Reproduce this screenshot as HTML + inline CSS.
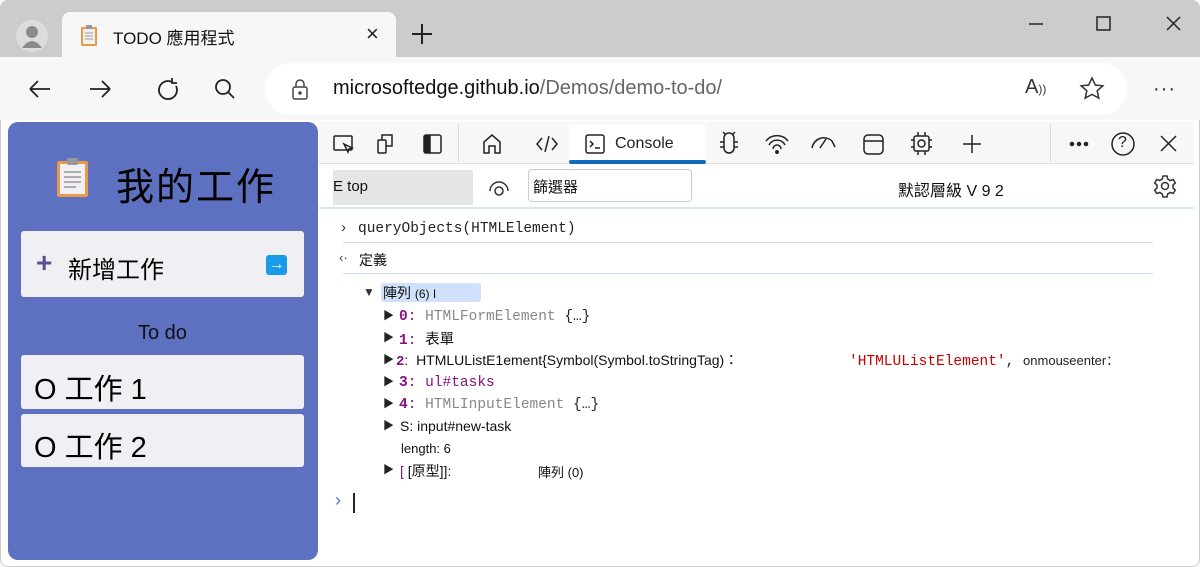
<!DOCTYPE html>
<html><head><meta charset="utf-8"><style>
*{box-sizing:border-box;margin:0;padding:0}
body{width:1200px;height:567px;overflow:hidden;background:#f7f7f7;font-family:"Liberation Sans","Noto Sans CJK TC",sans-serif;position:relative}
.abs{position:absolute}
.mono{font-family:"Liberation Mono","Noto Sans CJK TC",monospace}
svg{position:absolute}
</style></head><body>
<div class="abs" style="left:0;top:0;width:1200px;height:57px;background:#cccccc;border-radius:8px 8px 0 0"></div>
<div class="abs" style="left:16px;top:20px;width:32px;height:32px;border-radius:50%;background:#dcdcdc"></div>
<svg style="left:16px;top:20px" width="32" height="32"><circle cx="16" cy="12" r="6" fill="#8a8a8a"/><path d="M6 28 Q16 14 26 28Z" fill="#8a8a8a"/></svg>
<div class="abs" style="left:62px;top:12px;width:334px;height:46px;background:#f7f7f7;border-radius:8px 8px 0 0"></div>
<svg style="left:80px;top:25px" width="20" height="22"><rect x="1" y="2" width="16" height="19" rx="1" fill="#e8994a"/><rect x="3" y="4" width="12" height="15" fill="#f4f0f0"/><path d="M5 8h8M5 11h8M5 14h8" stroke="#999"/><rect x="6" y="0" width="6" height="4" fill="#999"/></svg>
<div class="abs" style="left:113px;top:24px;font-size:17px;color:#111">TODO 應用程式</div>
<div class="abs" style="left:366px;top:21px;font-size:22px;color:#222">×</div>
<svg style="left:410px;top:22px" width="24" height="24"><path d="M12 2v20M2 12h20" stroke="#222" stroke-width="2"/></svg>
<svg style="left:1025px;top:12px" width="170" height="24" fill="none" stroke="#222" stroke-width="1.5"><path d="M4 12h14"/><rect x="72" y="5" width="13" height="13"/><path d="M142 5l13 13M155 5l-13 13"/></svg>
<svg style="left:26px;top:76px" width="220" height="26" fill="none" stroke="#222" stroke-width="1.8"><path d="M4 13h20M4 13l8-8M4 13l8 8"/><path d="M64 13h20M84 13l-8-8M84 13l-8 8"/><path d="M146 6a9 9 0 1 0 4 4M146 2v5h5"/><circle cx="197" cy="11" r="7"/><path d="M202 16l6 6"/></svg>
<div class="abs" style="left:265px;top:63px;width:862px;height:52px;background:#fff;border-radius:26px"></div>
<svg style="left:290px;top:78px" width="20" height="24" fill="none" stroke="#444" stroke-width="1.5"><rect x="3" y="9" width="14" height="12" rx="2"/><path d="M6 9V6a4 4 0 0 1 8 0v3"/><circle cx="10" cy="15" r="1" fill="#444"/></svg>
<div class="abs" style="left:333px;top:77px;font-size:20px;color:#111">microsoftedge.github.io<span style="color:#666">/Demos/demo-to-do/</span></div>
<div class="abs" style="left:1025px;top:76px;font-size:20px;color:#333">A<span style="font-size:12px">))</span></div>
<svg style="left:1079px;top:76px" width="26" height="26"><path d="M13 2l3.3 7 7.5.8-5.6 5 1.6 7.4L13 18.4 6.2 22.2l1.6-7.4-5.6-5 7.5-.8z" fill="none" stroke="#333" stroke-width="1.5"/></svg>
<div class="abs" style="left:1153px;top:78px;font-size:20px;color:#222;letter-spacing:1px">···</div>
<div class="abs" style="left:0;top:120px;width:1200px;height:447px;background:#fff;border:1px solid #ccc;border-top:none;border-radius:0 0 8px 8px"></div>
<div class="abs" style="left:8px;top:122px;width:310px;height:438px;background:#5d71c0;border-radius:10px"></div>
<svg style="left:56px;top:158px" width="34" height="40"><rect x="1" y="3" width="31" height="36" rx="2" fill="#e8994a"/><rect x="4" y="6" width="25" height="30" fill="#f1eef4"/><path d="M8 14h17M8 19h17M8 24h17M8 29h12" stroke="#999" stroke-width="1.5"/><rect x="11" y="0" width="11" height="7" rx="2" fill="#999"/></svg>
<div class="abs" style="left:116px;top:156px;font-size:38px;color:#000;letter-spacing:2px">我的工作</div>
<div class="abs" style="left:21px;top:231px;width:283px;height:66px;background:#efeff4;border-radius:3px"></div>
<div class="abs" style="left:36px;top:249px;font-size:28px;color:#5a4f8f;font-weight:bold;line-height:28px">+</div>
<div class="abs" style="left:68px;top:250px;font-size:24px;color:#000">新增工作</div>
<div class="abs" style="left:266px;top:255px;width:21px;height:20px;background:#1a9be8;border-radius:3px;color:#fff;font-size:16px;line-height:20px;text-align:center;font-weight:bold">→</div>
<div class="abs" style="left:138px;top:322px;font-size:20px;color:#111">To do</div>
<div class="abs" style="left:21px;top:355px;width:283px;height:54px;background:#efeff4;border-radius:3px"></div>
<div class="abs" style="left:34px;top:366px;font-size:29px;color:#000">O 工作 1</div>
<div class="abs" style="left:21px;top:414px;width:283px;height:53px;background:#efeff4;border-radius:3px"></div>
<div class="abs" style="left:34px;top:424px;font-size:29px;color:#000">O 工作 2</div>
<div class="abs" style="left:319px;top:122px;width:875px;height:42px;background:#f7f7f7;border-bottom:1px solid #e0e0e0"></div>
<div class="abs" style="left:569px;top:124px;width:137px;height:40px;background:#fff"></div>
<div class="abs" style="left:569px;top:160px;width:137px;height:4px;background:#0f6cbd;border-radius:2px"></div>
<div class="abs" style="left:458px;top:124px;width:1px;height:38px;background:#ddd"></div>
<div class="abs" style="left:1050px;top:124px;width:1px;height:38px;background:#ddd"></div>
<svg style="left:326px;top:128px" width="870" height="32" fill="none" stroke="#222" stroke-width="1.5">
<rect x="8" y="8" width="18" height="14" rx="1"/><path d="M18 16l4 8 1-3 3-1z"/>
<rect x="52" y="12" width="8" height="13" rx="1"/><path d="M56 12V7h10v11h-6"/>
<rect x="98" y="7" width="17" height="18" rx="2"/><rect x="99" y="8" width="5" height="16" fill="#222"/>
<path d="M158 25V14l8-7 8 7v11h-5v-7h-6v7z"/>
<path d="M216 10l-5 6 5 6M226 10l5 6-5 6M223 8l-4 16"/>
<rect x="260" y="7" width="18" height="18" rx="2"/><path d="M264 13l3 3-3 3M269 20h5"/>
<path d="M398 10a5 5 0 0 1 10 0v10a5 5 0 0 1-10 0zM398 14h-4M398 19h-4M408 14h4M408 19h4M400 7l-3-3M406 7l3-3"/>
<path d="M440 13a14 14 0 0 1 22 0M443 17a9 9 0 0 1 16 0M447 21a4 4 0 0 1 8 0"/><circle cx="451" cy="24" r="1.2" fill="#222"/>
<path d="M486 20a12 12 0 0 1 20 -7M494 20l6-9M506 13l3 6"/>
<rect x="538" y="7" width="19" height="19" rx="4"/><path d="M538 13h19"/>
<rect x="588" y="8" width="15" height="15" rx="2"/><circle cx="595.5" cy="15.5" r="3.5"/><path d="M592 8V4M599 8V4M592 23v4M599 23v4M588 12h-3M588 19h-3M603 12h3M603 19h3"/>
<path d="M646 7v18M637 16h18"/>
<circle cx="746" cy="16" r="1.5" fill="#222"/><circle cx="753" cy="16" r="1.5" fill="#222"/><circle cx="760" cy="16" r="1.5" fill="#222"/>
<circle cx="797" cy="16" r="11"/>
<path d="M835 8l15 15M850 8l-15 15"/>
</svg>
<div class="abs" style="left:1118px;top:134px;font-size:16px;color:#222">?</div>
<div class="abs" style="left:615px;top:135px;font-size:16px;color:#222">Console</div>
<div class="abs" style="left:333px;top:170px;width:140px;height:35px;background:#e6e6e6"></div>
<div class="abs" style="left:333px;top:178px;font-size:15px;color:#111">E top</div>
<svg style="left:487px;top:175px" width="24" height="24" fill="none" stroke="#333" stroke-width="1.5"><path d="M3 16a9 9 0 0 1 18 0"/><circle cx="12" cy="16" r="4"/></svg>
<div class="abs" style="left:528px;top:169px;width:164px;height:33px;border:1.5px solid #ccc;border-radius:4px;background:#fff"></div>
<div class="abs" style="left:533px;top:176px;font-size:15px;color:#111">篩選器</div>
<div class="abs" style="left:898px;top:177px;font-size:16px;color:#111">默認層級 V 9 2</div>
<svg style="left:1153px;top:174px" width="24" height="24" fill="none" stroke="#333" stroke-width="1.5"><circle cx="12" cy="12" r="3.5"/><path d="M10 2h4l.7 3 2.6 1.5 3-1 2 3.5-2.3 2v3l2.3 2-2 3.5-3-1-2.6 1.5-.7 3h-4l-.7-3-2.6-1.5-3 1-2-3.5 2.3-2v-3l-2.3-2 2-3.5 3 1L9.3 5z"/></svg>
<div class="abs" style="left:319px;top:207px;width:875px;height:2px;background:#d6e4f5"></div>
<div class="abs" style="left:341px;top:219px;font-size:15px;color:#333">›</div>
<div class="abs mono" style="left:358px;top:221px;font-size:14.5px;color:#222">queryObjects(HTMLElement)</div>
<div class="abs" style="left:343px;top:242px;width:810px;height:1px;background:#cfe0f4"></div>
<div class="abs" style="left:339px;top:250px;font-size:13px;color:#444">‹·</div>
<div class="abs" style="left:359px;top:250px;font-size:14px;color:#111">定義</div>
<div class="abs" style="left:343px;top:273px;width:810px;height:1px;background:#cfe0f4"></div>
<div class="abs" style="left:381px;top:283px;width:100px;height:19px;background:#cfe1fb;border-radius:3px"></div>
<div class="abs" style="left:363px;top:285px;font-size:12px;color:#333">▼</div>
<div class="abs" style="left:383px;top:283px;font-size:14px;color:#111">陣列 <span style="font-size:12px">(6) I</span></div>
<div class="abs" style="left:383px;top:305px;font-size:11px;color:#222;line-height:22px">▶<br>▶<br>▶<br>▶<br>▶<br>▶<br><br>▶</div>
<div class="abs mono" style="left:399px;top:306px;font-size:14.5px;line-height:22px;color:#881280;white-space:pre"><b>0</b>: <span style="color:#888">HTMLFormElement</span> <span style="color:#222">{…}</span>
<b>1</b>: <span style="color:#111;font-family:'Noto Sans CJK TC'">表單</span></div>
<div class="abs" style="left:396px;top:350px;font-size:14px;color:#111"><b class="mono" style="color:#881280">2</b>:&nbsp; HTMLUListE1ement{Symbol(Symbol.toStringTag)：</div>
<div class="abs mono" style="left:849px;top:350px;font-size:14.5px;color:#c80000">'HTMLUListElement'<span style="color:#222">, <span style="font-family:'Liberation Sans';font-size:13px">onmouseenter：</span></span></div>
<div class="abs mono" style="left:399px;top:372px;font-size:14.5px;line-height:22px;color:#881280;white-space:pre"><b>3</b>: ul#tasks
<b>4</b>: <span style="color:#888">HTMLInputElement</span> <span style="color:#222">{…}</span></div>
<div class="abs" style="left:400px;top:418px;font-size:14px;color:#111">S: input#new-task</div>
<div class="abs" style="left:401px;top:441px;font-size:13px;color:#111">length: 6</div>
<div class="abs" style="left:400px;top:461px;font-size:14px;color:#111"><span style="color:#881280">[</span> [原型]]:</div>
<div class="abs" style="left:538px;top:462px;font-size:13px;color:#111">陣列 (0)</div>
<div class="abs" style="left:335px;top:490px;font-size:18px;color:#3c7ce0">›</div>
<div class="abs" style="left:353px;top:493px;width:1.5px;height:20px;background:#222"></div>
</body></html>
